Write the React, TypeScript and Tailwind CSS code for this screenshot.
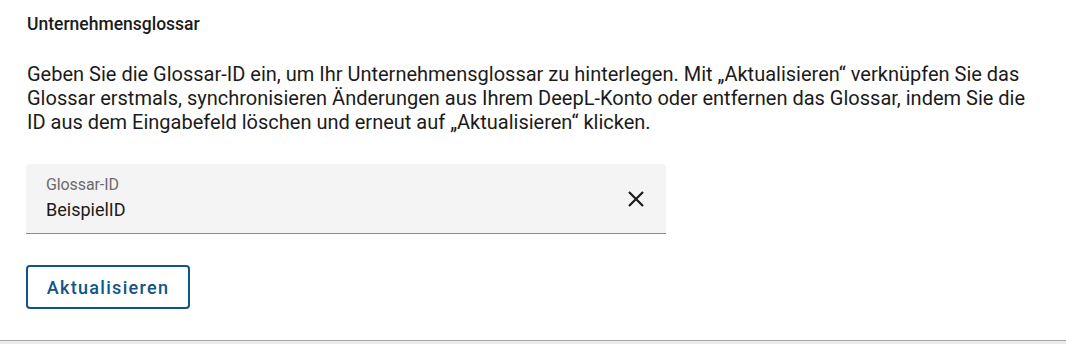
import React from "react";

export default function App() {
  return (
    <div className="w-[1066px] h-[344px] bg-white flex flex-col" style={{ fontFamily: "Roboto, 'Liberation Sans', sans-serif" }}>
      <div className="flex-1 px-[26px] pt-[12px]">
        <div className="text-[17.5px] leading-[24px] font-medium text-[#1b1b1b] pl-[1px]">Unternehmensglossar</div>
        <p className="mt-[26px] text-[20px] leading-[24px] text-[#1b1b1b] w-[1005px] pl-[1px]">
          Geben Sie die Glossar-ID ein, um Ihr Unternehmensglossar zu hinterlegen. Mit „Aktualisieren“ verknüpfen Sie das Glossar erstmals, synchronisieren Änderungen aus Ihrem DeepL-Konto oder entfernen das Glossar, indem Sie die ID aus dem Eingabefeld löschen und erneut auf „Aktualisieren“ klicken.
        </p>
        <div className="mt-[30px] w-[640px] h-[70px] bg-[#f4f4f4] rounded-t-[4px] border-b border-[#8c8c8c] flex items-center pl-[20px] pr-[18px]">
          <div className="flex-1 flex flex-col pt-[1px]">
            <span className="text-[16px] leading-[18px] text-[#6b6b6b] tracking-[-0.1px]">Glossar-ID</span>
            <span className="text-[18px] leading-[24px] text-[#1b1b1b] mt-[4px]">BeispielID</span>
          </div>
          <svg width="24" height="24" viewBox="0 0 24 24" className="mt-[1px]">
            <path d="M5 5L19 19M19 5L5 19" stroke="#1b1b1b" strokeWidth="2.2" strokeLinecap="butt" />
          </svg>
        </div>
        <button className="mt-[31px] h-[44px] w-[164px] border-2 border-[#0f5586] rounded-[4px] text-[18px] font-medium tracking-[1.3px] text-[#0f5586] bg-white">
          Aktualisieren
        </button>
      </div>
      <div className="h-[4px] border-t border-[#a8a8a8] bg-[#ececec]" />
    </div>
  );
}
